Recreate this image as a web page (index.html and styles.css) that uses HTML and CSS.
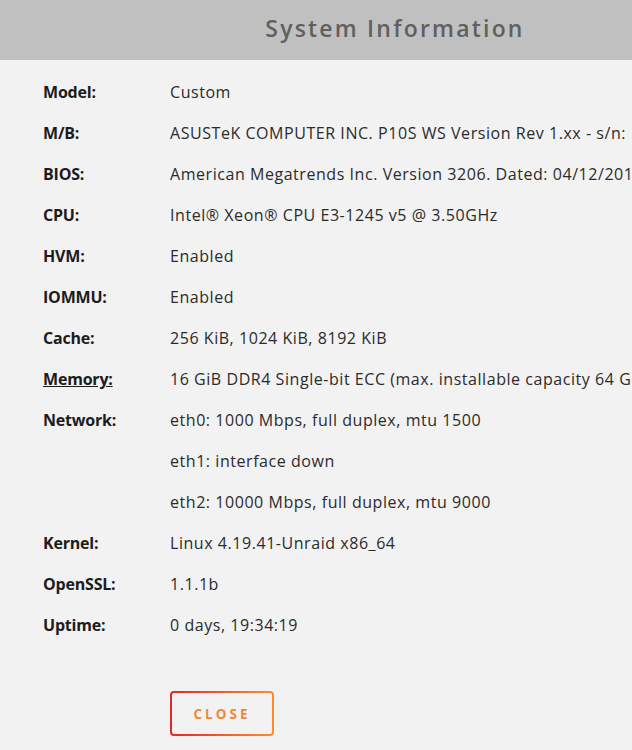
FILE: index.html
```html
<!DOCTYPE html>
<html>

<head>
    <title>System Information</title>
    <meta name="viewport" content="width=device-width, initial-scale=1.0">
    <link rel="stylesheet" href="styles.css">
</head>

<body>
    <div class="dialog">
        <h2 class="dialog-title">System Information</h2>

        <div class="info">
            <div class="label">Model:</div>
            <div class="value">Custom</div>

            <div class="label">M/B:</div>
            <div class="value">ASUSTeK COMPUTER INC. P10S WS Version Rev 1.xx - s/n: 170696055200140</div>

            <div class="label">BIOS:</div>
            <div class="value">American Megatrends Inc. Version 3206. Dated: 04/12/2018</div>

            <div class="label">CPU:</div>
            <div class="value">Intel® Xeon® CPU E3-1245 v5 @ 3.50GHz</div>

            <div class="label">HVM:</div>
            <div class="value">Enabled</div>

            <div class="label">IOMMU:</div>
            <div class="value">Enabled</div>

            <div class="label">Cache:</div>
            <div class="value">256 KiB, 1024 KiB, 8192 KiB</div>

            <div class="label"><a href="#" class="label-link">Memory:</a></div>
            <div class="value">16 GiB DDR4 Single-bit ECC (max. installable capacity 64 GiB)</div>

            <div class="label">Network:</div>
            <div class="value">
                <div>eth0: 1000 Mbps, full duplex, mtu 1500</div>
                <div>eth1: interface down</div>
                <div>eth2: 10000 Mbps, full duplex, mtu 9000</div>
            </div>

            <div class="label">Kernel:</div>
            <div class="value">Linux 4.19.41-Unraid x86_64</div>

            <div class="label">OpenSSL:</div>
            <div class="value">1.1.1b</div>

            <div class="label">Uptime:</div>
            <div class="value">0 days, 19:34:19</div>
        </div>

        <div class="actions">
            <button class="btn-close">Close</button>
        </div>
    </div>
</body>

</html>
```

FILE: styles.css
```css
body {
    font-family: 'Open Sans', 'Noto Sans', sans-serif;
    margin: 0;
    background: #f2f2f2;
    color: #1c1c1c;
    overflow: hidden;
}

/* the dialog is wider than the window, so long values run off the right edge */
.dialog {
    width: 790px;
}

.dialog-title {
    margin: 0;
    height: 60px;
    line-height: 57px;
    background: #c0c0c0;
    color: #606060;
    text-align: center;
    font-size: 23px;
    font-weight: 600;
    letter-spacing: 2.2px;
}

.info {
    display: grid;
    grid-template-columns: 127px 1fr;
    padding: 12px 0 0 43px;
    font-size: 16px;
    line-height: 41px;
}

.label {
    font-weight: 700;
    color: #1c1c1c;
    letter-spacing: -0.2px;
}

.label-link {
    color: inherit;
    text-decoration: underline;
}

.value {
    color: #2b2b2b;
    letter-spacing: 0.55px;
    white-space: nowrap;
}

.actions {
    padding: 45px 0 0 170px;
}

.btn-close {
    width: 104px;
    height: 45px;
    border: 2px solid transparent;
    border-radius: 4px;
    background:
        linear-gradient(#f2f2f2, #f2f2f2) padding-box,
        linear-gradient(90deg, #e22828, #ff8c2f) border-box;
    color: #f0883a;
    font-family: 'Open Sans', sans-serif;
    font-size: 13.5px;
    font-weight: 700;
    letter-spacing: 3px;
    text-transform: uppercase;
    cursor: pointer;
}
```
